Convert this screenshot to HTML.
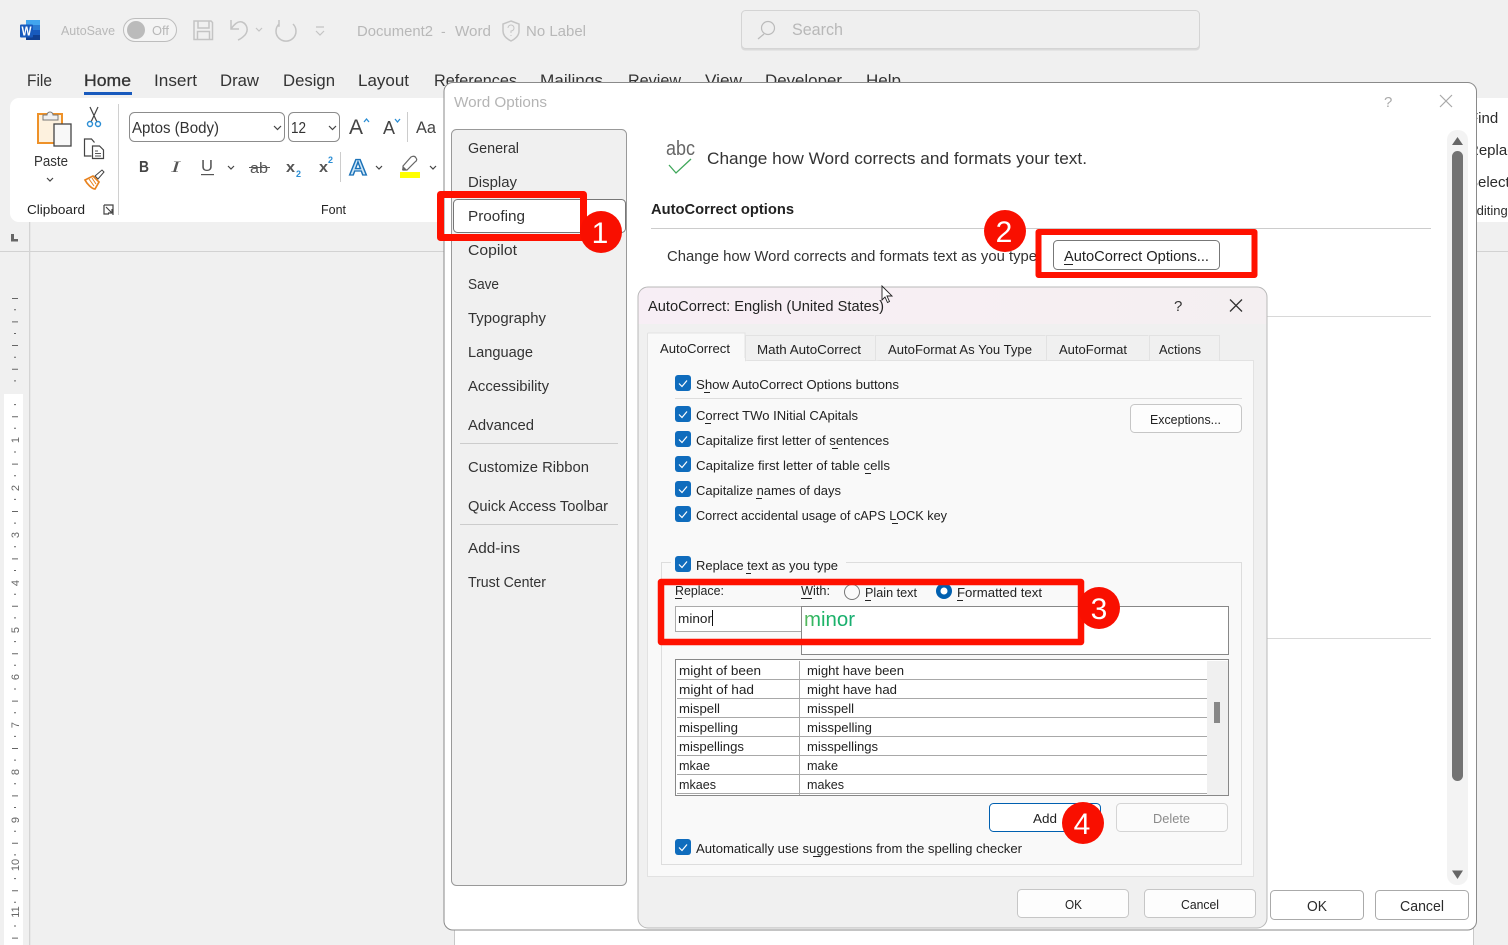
<!DOCTYPE html>
<html><head><meta charset="utf-8"><title>Word Options</title>
<style>
html,body{margin:0;padding:0;background:#f0f0f0;overflow:hidden;width:1508px;height:945px}
svg{display:block}
text{font-family:"Liberation Sans",sans-serif;fill:#2b2b2b;font-size:13px}
.t{font-size:17px;fill:#333}
.g{font-size:14px;fill:#b8b8b8}
.n{font-size:15px;fill:#333}
.c{font-size:13px;fill:#222}
.l{font-size:13px;fill:#222}
.r{font-size:11px;fill:#666;text-anchor:middle}
.b{font-size:32px;fill:#fff;text-anchor:middle}
.u{stroke:#222;stroke-width:1;fill:none}
.ck{fill:none;stroke:#fff;stroke-width:1.2}
.ic{fill:none;stroke:#444;stroke-width:1.2}
.qg{fill:none;stroke:#c4c4c4;stroke-width:1.5}
.ch{fill:none;stroke:#444;stroke-width:1.2}
</style></head><body>
<svg width="1508" height="945" viewBox="0 0 1508 945" xmlns="http://www.w3.org/2000/svg" shape-rendering="auto">
<rect width="1508" height="945" fill="#f0f0f0"/>

<!-- title bar -->
<rect x="26" y="20" width="14" height="5" fill="#41a5ee"/><rect x="26" y="25" width="14" height="5" fill="#2b7cd3"/><rect x="26" y="30" width="14" height="5" fill="#185abd"/><rect x="26" y="35" width="14" height="5" fill="#103f91"/>
<rect x="20" y="24.500" width="13" height="13" rx="1" fill="#185abd"/>
<text x="21.500" y="35.500" textLength="10" lengthAdjust="spacingAndGlyphs" style="font-size:12.500px;font-weight:bold;fill:#fff">W</text>
<text x="61" y="35" class="g" textLength="54" lengthAdjust="spacingAndGlyphs" style="font-size:13px">AutoSave</text>
<rect x="123.500" y="18.500" width="53" height="23" rx="11.500" fill="#f4f4f4" stroke="#bdbdbd"/>
<circle cx="136" cy="30" r="9" fill="#bbb"/>
<text x="152" y="35" class="g" textLength="17" lengthAdjust="spacingAndGlyphs" style="font-size:13px">Off</text>
<path class="qg" d="M194 21h17l1.500 1.500v17h-18.500zM198 21v7h11v-7M197.500 39.500v-8h12v8"/>
<path class="qg" d="M231 20v9h8M231 29c4-6 8-8 11-7c5 2 7 8 3 13c-2 2-4 4-7 5"/>
<path class="ch" style="stroke:#c4c4c4" d="M256 28l3 3 3-3"/>
<path class="qg" d="M279 20v6h-1M279 24a10 10 0 1 0 14 0"/>
<path class="ch" style="stroke:#c4c4c4" d="M316 27h8M316 31l4 4 4-4"/>
<text x="357" y="36" class="g" textLength="76" lengthAdjust="spacingAndGlyphs" style="font-size:14.500px">Document2</text>
<text x="441" y="36" class="g" style="font-size:14px">-</text>
<text x="455" y="36" class="g" textLength="36" lengthAdjust="spacingAndGlyphs" style="font-size:14.500px">Word</text>
<path class="qg" d="M511 21l8 3v7c0 5-4 8-8 10-4-2-8-5-8-10v-7z"/><path d="M511 36v-1" stroke="#c4c4c4"/><path d="M508 28a3 3 0 1 1 3 3v2" fill="none" stroke="#c4c4c4"/>
<text x="526" y="36" class="g" textLength="60" lengthAdjust="spacingAndGlyphs" style="font-size:14.500px">No Label</text>
<rect x="741" y="11" width="459" height="39.500" rx="4" fill="#dadada"/>
<rect x="741.500" y="10.500" width="458" height="38" rx="4" fill="#efefef" stroke="#d4d4d4"/>
<circle cx="768" cy="28" r="6.500" fill="none" stroke="#bbb" stroke-width="1.200"/><path d="M764 34l-6 5" stroke="#bbb" stroke-width="1.300"/>
<text x="792" y="35" class="g" textLength="51" lengthAdjust="spacingAndGlyphs" style="font-size:16.500px">Search</text>

<!-- tabs -->
<text class="t" x="27" y="86" textLength="25" lengthAdjust="spacingAndGlyphs">File</text>
<text class="t" x="84" y="86" textLength="47" lengthAdjust="spacingAndGlyphs" style="stroke:#333;stroke-width:.3">Home</text>
<rect x="84" y="92" width="48" height="3" fill="#185abd"/>
<text class="t" x="154" y="86" textLength="43" lengthAdjust="spacingAndGlyphs">Insert</text>
<text class="t" x="220" y="86" textLength="39" lengthAdjust="spacingAndGlyphs">Draw</text>
<text class="t" x="283" y="86" textLength="52" lengthAdjust="spacingAndGlyphs">Design</text>
<text class="t" x="358" y="86" textLength="51" lengthAdjust="spacingAndGlyphs">Layout</text>
<text class="t" x="434" y="86" textLength="83" lengthAdjust="spacingAndGlyphs">References</text>
<text class="t" x="540" y="86" textLength="63" lengthAdjust="spacingAndGlyphs">Mailings</text>
<text class="t" x="628" y="86" textLength="53" lengthAdjust="spacingAndGlyphs">Review</text>
<text class="t" x="705" y="86" textLength="37" lengthAdjust="spacingAndGlyphs">View</text>
<text class="t" x="765" y="86" textLength="77" lengthAdjust="spacingAndGlyphs">Developer</text>
<text class="t" x="866" y="86" textLength="35" lengthAdjust="spacingAndGlyphs">Help</text>

<!-- ribbon -->
<rect x="10" y="98" width="1510" height="124" rx="9" fill="#fff"/>
<rect x="38" y="114" width="24" height="29" fill="#fdf1de" stroke="#ee9128" stroke-width="2"/>
<path d="M43 120v-5h4a3 3 0 0 1 6 0h5v5z" fill="#f0f0f0" stroke="#777"/>
<rect x="54" y="124" width="17" height="22" fill="#f8f8f8" stroke="#444" stroke-width="1.300"/>
<text x="34" y="166" class="n" textLength="34" lengthAdjust="spacingAndGlyphs" style="font-size:14.500px">Paste</text>
<path class="ch" d="M47 178l3 3 3-3"/>
<!-- scissors -->
<path d="M90 107l7 15M98 107l-7 15" stroke="#444" stroke-width="1.200" fill="none"/><circle cx="90" cy="124" r="2.500" fill="none" stroke="#2a8dd4" stroke-width="1.400"/><circle cx="98" cy="124" r="2.500" fill="none" stroke="#2a8dd4" stroke-width="1.400"/>
<!-- copy -->
<path class="ic" d="M91.500 156h-7v-17h7l3 3.500M92.500 146h7l4 4v8.500h-11z" stroke-width="1.300"/><path d="M95 151h3M95 153.500h6M95 156h6" stroke="#555"/>
<!-- brush -->
<path d="M85 180l8-4 6 6-4 7c-3 0-8-5-10-9z" fill="#fff" stroke="#e8821e" stroke-width="1.700"/><path d="M89 179l5 7M92 178l4 6" stroke="#e8821e"/><path d="M95 176l7-6 2 2-6 7z" fill="#fff" stroke="#444"/>
<rect x="118" y="104" width="1" height="111" fill="#d0d0d0"/>
<text x="27" y="214" class="c" textLength="58" lengthAdjust="spacingAndGlyphs">Clipboard</text>
<path class="ic" d="M104 205h9v10M104 205v9h5M106 207l6 6M112 209v4h-4" stroke-width="1"/>
<rect x="129.500" y="112.500" width="155" height="29" rx="5" fill="#fff" stroke="#8c8c8c"/>
<text x="132" y="133" textLength="87" lengthAdjust="spacingAndGlyphs" style="font-size:16px;fill:#333">Aptos (Body)</text>
<path class="ch" d="M274 126l3.500 3.500 3.500-3.500"/>
<rect x="288.500" y="112.500" width="51" height="29" rx="5" fill="#fff" stroke="#8c8c8c"/>
<text x="291" y="133" textLength="15" lengthAdjust="spacingAndGlyphs" style="font-size:16px;fill:#333">12</text>
<path class="ch" d="M329 126l3.500 3.500 3.500-3.500"/>
<text x="349" y="134" style="font-size:21px;fill:#444" textLength="14" lengthAdjust="spacingAndGlyphs">A</text>
<path d="M364 122l2.500-3 2.500 3" fill="none" stroke="#2a8dd4" stroke-width="1.300"/>
<text x="383" y="134" style="font-size:18px;fill:#444" textLength="12" lengthAdjust="spacingAndGlyphs">A</text>
<path d="M395 119l2.500 3 2.500-3" fill="none" stroke="#2a8dd4" stroke-width="1.300"/>
<rect x="407" y="112" width="1" height="30" fill="#ccc"/>
<text x="416" y="133" style="font-size:17px;fill:#444" textLength="20" lengthAdjust="spacingAndGlyphs">Aa</text>
<text x="139" y="172" style="font-size:16px;font-weight:bold;fill:#444" textLength="10" lengthAdjust="spacingAndGlyphs">B</text>
<text x="171" y="172" style="font-size:16px;font-style:italic;font-family:'Liberation Serif',serif;fill:#555" textLength="9" lengthAdjust="spacingAndGlyphs">I</text>
<text x="201" y="171" style="font-size:16px;fill:#555" textLength="12" lengthAdjust="spacingAndGlyphs">U</text>
<rect x="201" y="174" width="13" height="1.200" fill="#555"/>
<path class="ch" d="M228 166l3 3 3-3"/>
<text x="250" y="173" style="font-size:15px;fill:#555" textLength="18" lengthAdjust="spacingAndGlyphs">ab</text>
<rect x="249" y="167" width="21" height="1" fill="#555"/>
<text x="286" y="172" style="font-size:15px;font-weight:bold;fill:#555" textLength="9" lengthAdjust="spacingAndGlyphs">x</text>
<text x="296" y="177" style="font-size:9px;fill:#2a8dd4;font-weight:bold">2</text>
<text x="319" y="172" style="font-size:15px;font-weight:bold;fill:#555" textLength="9" lengthAdjust="spacingAndGlyphs">x</text>
<text x="328" y="163" style="font-size:9px;fill:#2a8dd4;font-weight:bold">2</text>
<rect x="340" y="152" width="1" height="30" fill="#ccc"/>
<text x="349" y="175" style="font-size:22px;font-weight:bold;fill:#cfe6f7;stroke:#1b72b8;stroke-width:1.300" textLength="18" lengthAdjust="spacingAndGlyphs">A</text>
<path class="ch" d="M376 166l3 3 3-3"/>
<path d="M403 166l8-9c2-1 4-1 5 1 1 1 1 3-1 4l-8 8-4 0z" fill="#fff" stroke="#666" stroke-width="1.200"/><path d="M403 166l4 4-5 0z" fill="#666"/>
<rect x="400" y="172" width="20" height="6" fill="#ffff00"/>
<path class="ch" d="M430 166l3 3 3-3"/>
<text x="321" y="214" class="c" textLength="25" lengthAdjust="spacingAndGlyphs">Font</text>
<text x="1469" y="123" style="font-size:15px">Find</text>
<text x="1468" y="155" style="font-size:15px">Replace</text>
<text x="1468" y="187" style="font-size:15px">Select</text>
<text x="1468" y="215" style="font-size:13px">Editing</text>

<!-- ruler / page -->
<rect x="454" y="252" width="1019" height="693" fill="#fff"/>
<rect x="454" y="252" width="1" height="693" fill="#c8c8c8"/>
<rect x="1473" y="252" width="1" height="693" fill="#c8c8c8"/>
<rect x="0" y="251" width="1508" height="1" fill="#d2d2d2"/>
<rect x="29" y="222" width="1.300" height="723" fill="#d4d4d4"/>
<path d="M11 234h3v5h4v2.500h-7z" fill="#666"/>
<rect x="4" y="394" width="19" height="551" fill="#fff"/>
<path d="M15 309.300v640" stroke="#666" stroke-width="2" stroke-dasharray="1 22.700"/>
<path d="M15 321.400v640" stroke="#666" stroke-width="6" stroke-dasharray="1 46.400"/>
<rect x="12" y="298" width="6" height="1" fill="#666"/><rect x="12" y="345" width="6" height="1" fill="#666"/>
<g>
<text class="r" transform="rotate(-90 15 440)" x="15" y="444">1</text>
<text class="r" transform="rotate(-90 15 488)" x="15" y="492">2</text>
<text class="r" transform="rotate(-90 15 535)" x="15" y="539">3</text>
<text class="r" transform="rotate(-90 15 583)" x="15" y="587">4</text>
<text class="r" transform="rotate(-90 15 630)" x="15" y="634">5</text>
<text class="r" transform="rotate(-90 15 677)" x="15" y="681">6</text>
<text class="r" transform="rotate(-90 15 725)" x="15" y="729">7</text>
<text class="r" transform="rotate(-90 15 772)" x="15" y="776">8</text>
<text class="r" transform="rotate(-90 15 820)" x="15" y="824">9</text>
<text class="r" transform="rotate(-90 15 865)" x="15" y="869">10</text>
<text class="r" transform="rotate(-90 15 912)" x="15" y="916">11</text>
</g>

<!-- Word Options dialog -->
<rect x="444" y="82.500" width="1032.500" height="847.500" rx="9" fill="#fff" stroke="#8a8a8a"/>
<text x="454" y="107" textLength="93" lengthAdjust="spacingAndGlyphs" style="font-size:15px;fill:#b4b4b4">Word Options</text>
<text x="1384" y="107" style="font-size:15px;fill:#aaa">?</text>
<path d="M1440 95l12 12M1452 95l-12 12" stroke="#a8a8a8" stroke-width="1.200"/>
<rect x="451.500" y="129.500" width="175" height="756" rx="5" fill="#f0f0f0" stroke="#999"/>
<rect x="453.500" y="199.500" width="172" height="33" rx="4" fill="#fff" stroke="#777"/>
<g class="nav">
<text class="n" x="468" y="153" textLength="51" lengthAdjust="spacingAndGlyphs">General</text>
<text class="n" x="468" y="187" textLength="49" lengthAdjust="spacingAndGlyphs">Display</text>
<text class="n" x="468" y="221" textLength="57" lengthAdjust="spacingAndGlyphs">Proofing</text>
<text class="n" x="468" y="255" textLength="49" lengthAdjust="spacingAndGlyphs">Copilot</text>
<text class="n" x="468" y="289" textLength="31" lengthAdjust="spacingAndGlyphs">Save</text>
<text class="n" x="468" y="323" textLength="78" lengthAdjust="spacingAndGlyphs">Typography</text>
<text class="n" x="468" y="357" textLength="65" lengthAdjust="spacingAndGlyphs">Language</text>
<text class="n" x="468" y="391" textLength="81" lengthAdjust="spacingAndGlyphs">Accessibility</text>
<text class="n" x="468" y="430" textLength="66" lengthAdjust="spacingAndGlyphs">Advanced</text>
<text class="n" x="468" y="472" textLength="121" lengthAdjust="spacingAndGlyphs">Customize Ribbon</text>
<text class="n" x="468" y="511" textLength="140" lengthAdjust="spacingAndGlyphs">Quick Access Toolbar</text>
<text class="n" x="468" y="553" textLength="52" lengthAdjust="spacingAndGlyphs">Add-ins</text>
<text class="n" x="468" y="587" textLength="78" lengthAdjust="spacingAndGlyphs">Trust Center</text>
</g>
<rect x="460" y="443" width="158" height="1" fill="#ccc"/>
<rect x="460" y="524" width="158" height="1" fill="#ccc"/>

<text x="666" y="155" textLength="29" lengthAdjust="spacingAndGlyphs" style="font-size:20px;fill:#666">abc</text>
<path d="M669 165l7 8 15-14" fill="none" stroke="#3fa75a" stroke-width="1.300"/>
<text x="707" y="164" textLength="380" lengthAdjust="spacingAndGlyphs" style="font-size:17px;fill:#333">Change how Word corrects and formats your text.</text>
<text x="651" y="214" textLength="143" lengthAdjust="spacingAndGlyphs" style="font-size:15px;font-weight:bold;fill:#222">AutoCorrect options</text>
<rect x="651" y="228" width="780" height="1" fill="#ccc"/>
<text x="667" y="261" textLength="370" lengthAdjust="spacingAndGlyphs" style="font-size:15px;fill:#333">Change how Word corrects and formats text as you type</text>
<rect x="1053.500" y="240.500" width="166" height="29" rx="4" fill="#fff" stroke="#777"/>
<text x="1064" y="261" textLength="145" lengthAdjust="spacingAndGlyphs" style="font-size:15px;fill:#222">AutoCorrect Options...</text>
<path class="u" d="M1064 264.500h9"/>
<rect x="1266" y="316" width="165" height="1" fill="#d8d8d8"/>
<rect x="1266" y="638" width="165" height="1" fill="#d8d8d8"/>
<rect x="1447" y="130" width="21" height="755" rx="10" fill="#f3f3f3"/>
<path d="M1457.500 137l5.500 8h-11z" fill="#666"/>
<rect x="1452" y="151" width="11" height="630" rx="5.500" fill="#737373"/>
<path d="M1457.500 879l5.500-8.500h-11z" fill="#666"/>
<rect x="1270.500" y="890.500" width="93" height="29" rx="4" fill="#fff" stroke="#aaa"/>
<rect x="1375.500" y="890.500" width="93" height="29" rx="4" fill="#fff" stroke="#aaa"/>
<text x="1307" y="911" textLength="20" lengthAdjust="spacingAndGlyphs" style="font-size:15px">OK</text>
<text x="1400" y="911" textLength="44" lengthAdjust="spacingAndGlyphs" style="font-size:15px">Cancel</text>

<!-- AutoCorrect dialog -->
<defs><linearGradient id="ti" x1="0" x2="1" y1="0" y2="0"><stop offset="0" stop-color="#f7eef5"/><stop offset=".5" stop-color="#f7eff3"/><stop offset="1" stop-color="#f4eff1"/></linearGradient>
<clipPath id="dc"><rect x="638" y="287" width="629" height="641" rx="10"/></clipPath>
<linearGradient id="gm" x1="0" x2="1" y1="0" y2="0"><stop offset="0" stop-color="#5cb85c"/><stop offset=".3" stop-color="#1fb565"/><stop offset="1" stop-color="#18ad72"/></linearGradient></defs>
<rect x="638" y="287" width="629" height="641" rx="10" fill="#f0f0f0"/>
<g clip-path="url(#dc)"><rect x="638" y="287" width="629" height="37" fill="url(#ti)"/></g>
<rect x="638" y="287" width="629" height="641" rx="10" fill="none" stroke="#b8b8b8"/>
<text x="648" y="311" textLength="236" lengthAdjust="spacingAndGlyphs" style="font-size:15px;fill:#222">AutoCorrect: English (United States)</text>
<text x="1174" y="311" style="font-size:15px;fill:#333">?</text>
<path d="M1230 299.500l12 12M1242 299.500l-12 12" stroke="#333" stroke-width="1.300"/>
<rect x="647.500" y="360.500" width="606" height="516" fill="#f9f9f9" stroke="#e2e2e2"/>
<path d="M745.500 360.500v-25h129M875.500 360.500v-25h170M1046.500 360.500v-25h102M1149.500 360.500v-25h70v25" fill="#f0f0f0" stroke="#e2e2e2"/>
<path d="M647.500 361v-27a1 1 0 0 1 1-1h96.500v28z" fill="#f9f9f9" stroke="#e2e2e2"/>
<rect x="648" y="358" width="97" height="4" fill="#f9f9f9"/>
<text x="660" y="353" class="l" textLength="70" lengthAdjust="spacingAndGlyphs">AutoCorrect</text>
<text x="757" y="354" class="l" textLength="104" lengthAdjust="spacingAndGlyphs">Math AutoCorrect</text>
<text x="888" y="354" class="l" textLength="144" lengthAdjust="spacingAndGlyphs">AutoFormat As You Type</text>
<text x="1059" y="354" class="l" textLength="68" lengthAdjust="spacingAndGlyphs">AutoFormat</text>
<text x="1159" y="354" class="l" textLength="42" lengthAdjust="spacingAndGlyphs">Actions</text>

<g fill="#0f6cbd">
<rect x="675" y="375" width="16" height="16" rx="3"/><rect x="675" y="406" width="16" height="16" rx="3"/><rect x="675" y="431" width="16" height="16" rx="3"/><rect x="675" y="456" width="16" height="16" rx="3"/><rect x="675" y="481" width="16" height="16" rx="3"/><rect x="675" y="506" width="16" height="16" rx="3"/><rect x="675" y="839" width="16" height="16" rx="3"/>
</g>
<g class="ck">
<path d="M679 383.500l3 3 5-6"/><path d="M679 414.500l3 3 5-6"/><path d="M679 439.500l3 3 5-6"/><path d="M679 464.500l3 3 5-6"/><path d="M679 489.500l3 3 5-6"/><path d="M679 514.500l3 3 5-6"/><path d="M679 847.500l3 3 5-6"/>
</g>
<text x="696" y="389" class="l" textLength="203" lengthAdjust="spacingAndGlyphs">Show AutoCorrect Options buttons</text>
<rect x="675" y="398" width="567" height="1" fill="#ddd"/>
<text x="696" y="420" class="l" textLength="162" lengthAdjust="spacingAndGlyphs">Correct TWo INitial CApitals</text>
<text x="696" y="445" class="l" textLength="193" lengthAdjust="spacingAndGlyphs">Capitalize first letter of sentences</text>
<text x="696" y="470" class="l" textLength="194" lengthAdjust="spacingAndGlyphs">Capitalize first letter of table cells</text>
<text x="696" y="495" class="l" textLength="145" lengthAdjust="spacingAndGlyphs">Capitalize names of days</text>
<text x="696" y="520" class="l" textLength="251" lengthAdjust="spacingAndGlyphs">Correct accidental usage of cAPS LOCK key</text>
<path class="u" d="M704 392.500h6M705 423.500h6M832 448.500h6M865 473.500h6M756 498.500h6M892 523.500h6M746 573.500h5M1150 427.500h7M675 598.500h7M801 598.500h11M865 600.500h6M957 600.500h6M1033 826.500h9M813 856.500h8"/>
<rect x="1130.500" y="404.500" width="111" height="28" rx="4" fill="#fdfdfd" stroke="#c6c6c6"/>
<text x="1150" y="424" class="l" textLength="71" lengthAdjust="spacingAndGlyphs">Exceptions...</text>

<rect x="661.500" y="562.500" width="580" height="302" fill="none" stroke="#ddd"/>
<rect x="671" y="556" width="175" height="12" fill="#f9f9f9"/>
<rect x="675" y="556" width="16" height="16" rx="3" fill="#0f6cbd"/><path class="ck" d="M679 564.500l3 3 5-6"/>
<text x="696" y="570" class="l" textLength="142" lengthAdjust="spacingAndGlyphs">Replace text as you type</text>
<text x="675" y="595" class="l" textLength="49" lengthAdjust="spacingAndGlyphs">Replace:</text>
<text x="801" y="595" class="l" textLength="29" lengthAdjust="spacingAndGlyphs">With:</text>
<circle cx="852" cy="592" r="7.500" fill="#fafafa" stroke="#777"/>
<text x="865" y="597" class="l" textLength="52" lengthAdjust="spacingAndGlyphs">Plain text</text>
<circle cx="944" cy="591" r="8" fill="#0060b0"/><circle cx="944" cy="591" r="3.500" fill="#fff"/>
<text x="957" y="597" class="l" textLength="85" lengthAdjust="spacingAndGlyphs">Formatted text</text>
<rect x="675.500" y="606.500" width="126" height="25" fill="#fff" stroke="#aaa"/>
<text x="678" y="623" class="l" textLength="34" lengthAdjust="spacingAndGlyphs">minor</text>
<rect x="712" y="610" width="1" height="16" fill="#111"/>
<rect x="801.500" y="606.500" width="427" height="48" fill="#fff" stroke="#888"/>
<text x="804" y="626" textLength="51" lengthAdjust="spacingAndGlyphs" style="font-size:20px;fill:url(#gm)">minor</text>

<rect x="675.500" y="659.500" width="553" height="136" fill="#fff" stroke="#888"/>
<rect x="1207" y="661" width="21" height="134" fill="#f0f0f0"/>
<rect x="1214" y="702" width="6" height="21" fill="#888"/>
<rect x="799" y="661" width="1" height="134" fill="#aaa"/>
<path d="M677 679.500h530M677 698.500h530M677 717.500h530M677 736.500h530M677 755.500h530M677 774.500h530M677 793.500h530" stroke="#a8a8a8"/>
<text x="679" y="675" class="l" textLength="82" lengthAdjust="spacingAndGlyphs">might of been</text>
<text x="679" y="694" class="l" textLength="75" lengthAdjust="spacingAndGlyphs">might of had</text>
<text x="679" y="713" class="l" textLength="41" lengthAdjust="spacingAndGlyphs">mispell</text>
<text x="679" y="732" class="l" textLength="59" lengthAdjust="spacingAndGlyphs">mispelling</text>
<text x="679" y="751" class="l" textLength="65" lengthAdjust="spacingAndGlyphs">mispellings</text>
<text x="679" y="770" class="l" textLength="31" lengthAdjust="spacingAndGlyphs">mkae</text>
<text x="679" y="789" class="l" textLength="37" lengthAdjust="spacingAndGlyphs">mkaes</text>
<text x="807" y="675" class="l" textLength="97" lengthAdjust="spacingAndGlyphs">might have been</text>
<text x="807" y="694" class="l" textLength="90" lengthAdjust="spacingAndGlyphs">might have had</text>
<text x="807" y="713" class="l" textLength="47" lengthAdjust="spacingAndGlyphs">misspell</text>
<text x="807" y="732" class="l" textLength="65" lengthAdjust="spacingAndGlyphs">misspelling</text>
<text x="807" y="751" class="l" textLength="71" lengthAdjust="spacingAndGlyphs">misspellings</text>
<text x="807" y="770" class="l" textLength="31" lengthAdjust="spacingAndGlyphs">make</text>
<text x="807" y="789" class="l" textLength="37" lengthAdjust="spacingAndGlyphs">makes</text>

<rect x="989.500" y="803.500" width="111" height="28" rx="4" fill="#fff" stroke="#0060b0"/>
<text x="1033" y="823" class="l" textLength="24" lengthAdjust="spacingAndGlyphs">Add</text>
<rect x="1116.500" y="803.500" width="111" height="28" rx="4" fill="#fbfbfb" stroke="#d4d4d4"/>
<text x="1153" y="823" class="l" textLength="37" lengthAdjust="spacingAndGlyphs" style="fill:#8a8a8a">Delete</text>
<text x="696" y="853" class="l" textLength="326" lengthAdjust="spacingAndGlyphs">Automatically use suggestions from the spelling checker</text>
<rect x="1017.500" y="889.500" width="111" height="28" rx="4" fill="#fdfdfd" stroke="#c6c6c6"/>
<rect x="1144.500" y="889.500" width="111" height="28" rx="4" fill="#fdfdfd" stroke="#c6c6c6"/>
<text x="1065" y="909" class="l" textLength="17" lengthAdjust="spacingAndGlyphs">OK</text>
<text x="1181" y="909" class="l" textLength="38" lengthAdjust="spacingAndGlyphs">Cancel</text>

<!-- cursor -->
<path d="M882 286v14l3-3 2.500 5.500 2-1-2.500-5.500h5z" fill="#fff" stroke="#222" stroke-width=".9"/>

<!-- annotations -->
<g fill="none" stroke="#ff1100" stroke-linejoin="round">
<rect x="440.500" y="194.500" width="143" height="43" stroke-width="7"/>
<rect x="1038.500" y="232" width="216" height="43" stroke-width="6"/>
<rect x="661" y="582" width="420" height="60" stroke-width="6.500"/>
</g>
<g fill="#f90f00">
<circle cx="601" cy="232" r="21"/><circle cx="1005" cy="231" r="21"/><circle cx="1099" cy="608" r="21"/><circle cx="1083" cy="823" r="21"/>
</g>
<text class="b" x="600" y="243" style="font-size:30px">1</text>
<text class="b" x="1004" y="242" style="font-size:30px">2</text>
<text class="b" x="1099" y="619" style="font-size:30px">3</text>
<text class="b" x="1082" y="834" style="font-size:30px">4</text>
</svg>
</body></html>
